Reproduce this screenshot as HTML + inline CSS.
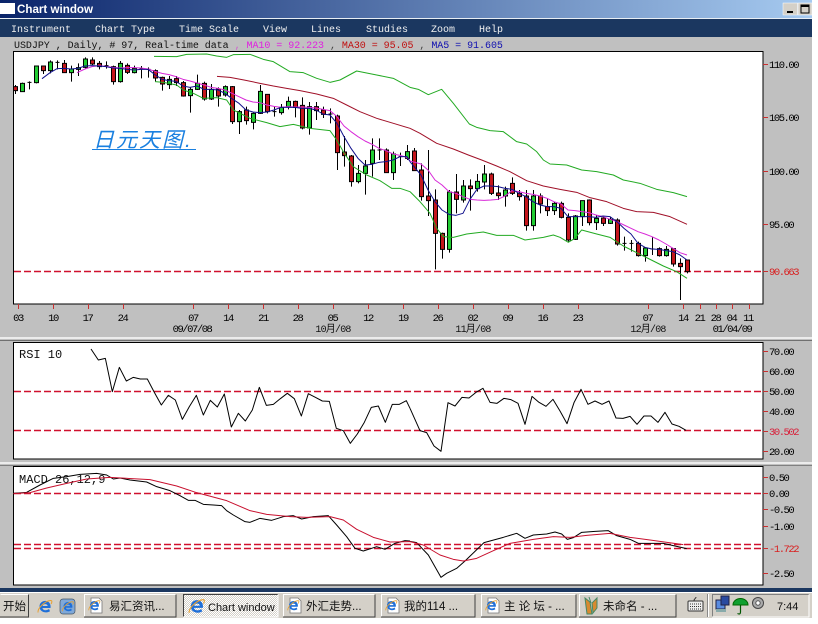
<!DOCTYPE html>
<html><head><meta charset="utf-8"><style>
html,body{margin:0;padding:0;background:#fff;width:818px;height:624px;overflow:hidden}
svg{display:block;position:absolute;left:0;top:0}
text{white-space:pre}
.m{font:10px "Liberation Mono",monospace}
.a{font:10.5px "Liberation Mono",monospace;letter-spacing:-1.45px;fill:#000}
.t{font:11.5px "Liberation Sans","Noto Sans CJK SC",sans-serif;fill:#111}
</style></head><body>
<svg width="818" height="624" viewBox="0 0 818 624" xmlns="http://www.w3.org/2000/svg">
<defs>
<linearGradient id="tb" x1="0" x2="1" y1="0" y2="0"><stop offset="0" stop-color="#0a246a"/><stop offset="1" stop-color="#a6caf0"/></linearGradient>
<pattern id="dith" width="2" height="2" patternUnits="userSpaceOnUse"><rect width="2" height="2" fill="#d4d0c8"/><rect width="1" height="1" fill="#fff"/><rect x="1" y="1" width="1" height="1" fill="#fff"/></pattern>
<g id="ie">
<path fill-rule="evenodd" fill="#1f6fd8" d="M13.500 9H5.500c.3 2.500 4 3 6.500 1l1 2.200c-4 2.500-10.500 1-10.500-4.700 0-5.500 7-7.500 10-3.500 1 1.300 1.300 3.200 1 5zM5.600 7h5c0-2.500-4.500-2.500-5 0z"/>
<path d="M1 13.500C.5 9 8 2 13.500 1.500c2-.2 1.500 2 .5 3.500" fill="none" stroke="#e8a030" stroke-width="1"/>
</g>
<g id="doc"><path d="M3 0h8l3 3v12H3z" fill="#fff" stroke="#777" stroke-width=".8"/><use href="#ie" transform="translate(0 1.500) scale(.8)"/></g>
</defs>
<!-- window -->
<rect x="0" y="0" width="812" height="592" fill="#c0c0c0"/>
<rect x="0" y="0" width="812" height="18" fill="url(#tb)"/>
<rect x="0" y="18" width="812" height="1" fill="#e8eef4"/>
<rect x="0" y="3" width="15" height="11" fill="#fff"/>
<text x="17" y="13" style="font:bold 11.6px 'Liberation Sans',sans-serif" fill="#fff">Chart window</text>
<rect x="783" y="3" width="14.500" height="12" fill="#d4d0c8" stroke="#fff" stroke-width=".5"/><rect x="787" y="11" width="6" height="2" fill="#000"/>
<rect x="798" y="3" width="14" height="12" fill="#d4d0c8" stroke="#fff" stroke-width=".5"/><rect x="801" y="5" width="8" height="8" fill="none" stroke="#000"/><rect x="801" y="5" width="8" height="2" fill="#000"/>
<rect x="0" y="19" width="812" height="18" fill="#1b3760"/>
<g class="m" fill="#f0f0f0">
<text x="11" y="32">Instrument</text><text x="95" y="32">Chart Type</text><text x="179" y="32">Time Scale</text><text x="263" y="32">View</text><text x="311" y="32">Lines</text><text x="366" y="32">Studies</text><text x="431" y="32">Zoom</text><text x="479" y="32">Help</text>
</g>
<text class="m" x="14" y="48" fill="#111" style="letter-spacing:-.04px">USDJPY , Daily, # 97, Real-time data<tspan fill="#d060d0"> , </tspan><tspan fill="#e020e0">MA10 = 92.223</tspan><tspan fill="#444"> , </tspan><tspan fill="#c01010">MA30 = 95.05</tspan><tspan fill="#444"> , </tspan><tspan fill="#1010b0">MA5 = 91.605</tspan></text>

<!-- panels -->
<rect x="13.500" y="51.500" width="749.500" height="252.500" fill="#fff" stroke="#000"/>
<rect x="0" y="337" width="812" height="2" fill="#ececec"/><rect x="0" y="340" width="812" height="1" fill="#707070"/>
<rect x="13.500" y="342.500" width="749.500" height="116.500" fill="#fff" stroke="#000"/>
<rect x="0" y="462" width="812" height="2" fill="#ececec"/><rect x="0" y="465" width="812" height="1" fill="#808080"/>
<rect x="13.500" y="466.500" width="749.500" height="118.500" fill="#fff" stroke="#000"/>
<rect x="0" y="588" width="812" height="4" fill="#1b3760"/>

<!-- dashes -->
<g stroke="#d0102e" stroke-width="1.400" stroke-dasharray="7 3" fill="none">
<path d="M14 271.500H763"/><path d="M14 391.500H763"/><path d="M14 430.500H763"/><path d="M14 493.500H763"/><path d="M14 544.500H763"/><path d="M14 548.500H763"/>
</g>

<!-- ticks -->
<g stroke="#c83030" stroke-width="1" fill="none">
<path d="M18.500 304v5M53.500 304v5M88.500 304v5M123.500 304v5M193.500 304v5M228.500 304v5M263.500 304v5M298.500 304v5M333.500 304v5M368.500 304v5M403.500 304v5M438.500 304v5M473.500 304v5M508.500 304v5M543.500 304v5M578.500 304v5M648.500 304v5M683.500 304v5M700.500 304v5M716.500 304v5M732.500 304v5M749.500 304v5"/>
<path d="M763 64.500h5M763 117.500h5M763 171.500h5M763 224.500h5M763 271.500h5M763 351.500h5M763 371.500h5M763 391.500h5M763 411.500h5M763 431.500h5M763 451.500h5M763 477.500h5M763 493.500h5M763 509.500h5M763 526.500h5M763 548.500h5M763 573.500h5"/>
</g>

<!-- candles left -->
<g transform="scale(.33333)" stroke="#000" stroke-width="3">
<path fill="none" d="M46.500 255V282M67.500 248V276M88.500 244V268M82.500 247h12M109.500 198V250M130.500 197V222M151.500 181V220M172.500 181V208M166.500 187h12M193.500 180V218M214.500 197V245M235.500 190V228M256.500 172V205M277.500 172V195M298.500 183V208M319.500 184V206M313.500 197h12M340.500 197V254M361.500 183V248M382.500 190V222M403.500 197V220M424.500 198V235M418.500 207h12M445.500 202V233M439.500 208h12M466.500 208V244M487.500 230V272M508.500 228V267M529.500 228V258M550.500 243V290M571.500 262V338M592.500 224V270M613.500 245V302M634.500 252V300M655.500 262V320M676.500 256V290M697.500 258V372M718.500 330V402M739.500 320V374M760.500 338V388M781.500 255V342M802.500 283V340M823.500 320V350M817.500 335h12M844.500 312V344M865.500 290V328M886.500 302V352M907.500 292V388M928.500 306V404M949.500 306V360M970.500 320V354M991.500 325V370M985.500 342h12M1012.500 344V510M1033.500 408V500M1054.500 465V560M1075.500 495V550M1096.500 480V584M1117.500 415V530M1138.500 415V480M1132.500 450h12M1159.500 445V518M1180.500 455V540M1201.500 458V498M1195.500 470h12M1222.500 435V480"/>
<path fill="#c4161c" d="M40.500 260h12v12h-12zM124.500 198h12v14h-12zM187.500 190h12v28h-12zM271.500 180h12v12h-12zM292.500 190h12v10h-12zM334.500 200h12v45h-12zM376.500 196h12v21h-12zM460.500 212h12v22h-12zM481.500 232h12v20h-12zM523.500 236h12v12h-12zM544.500 248h12v40h-12zM607.500 250h12v47h-12zM649.500 267h12v21h-12zM691.500 260h12v105h-12zM733.500 330h12v32h-12zM796.500 283h12v52h-12zM880.500 304h12v18h-12zM901.500 316h12v68h-12zM943.500 320h12v12h-12zM964.500 330h12v13h-12zM1006.500 348h12v110h-12zM1027.500 456h12v11h-12zM1048.500 468h12v77h-12zM1153.500 450h12v68h-12z"/>
<path fill="#22cc33" d="M61.500 250h12v25h-12zM103.500 198h12v50h-12zM145.500 186h12v26h-12zM208.500 207h12v11h-12zM229.500 203h12v5h-12zM250.500 177h12v25h-12zM355.500 190h12v55h-12zM397.500 205h12v13h-12zM502.500 238h12v16h-12zM565.500 268h12v19h-12zM586.500 250h12v18h-12zM628.500 268h12v29h-12zM670.500 260h12v25h-12zM712.500 335h12v30h-12zM754.500 340h12v27h-12zM775.500 274h12v66h-12zM838.500 322h12v16h-12zM859.500 304h12v16h-12zM922.500 320h12v64h-12zM1069.500 520h12v25h-12zM1090.500 498h12v22h-12zM1111.500 450h12v40h-12zM1174.500 462h12v56h-12zM1216.500 455h12v20h-12z"/>
</g>
<!-- candles right -->
<g transform="translate(410 160) scale(.33333)" stroke="#000" stroke-width="3">
<path fill="none" d="M13.500 -36V33M34.500 10V122M55.500 -30V168M76.500 88V328M97.500 218V296M118.500 90V278M139.500 42V160M160.500 60V128M181.500 58V152M202.500 42V95M223.500 15V88M244.500 38V105M265.500 76V120M286.500 80V140M307.500 52V105M328.500 90V122M349.500 90V212M370.500 90V212M391.500 100V160M412.500 115V168M433.500 125V165M454.500 125V175M475.500 160V245M496.500 165V240M517.500 122V198M538.500 118V196M559.500 165V210M580.500 168V198M601.500 170V192M622.500 175V257M643.500 230V272M637.500 250h12M664.500 240V275M658.500 250h12M685.500 245V290M706.500 262V305M727.500 232V285M721.500 267h12M748.500 262V290M769.500 258V290M790.500 265V320M811.500 295V420M832.500 300V340"/>
<path fill="#c4161c" d="M7.500 -27h12v59h-12zM28.500 30h12v80h-12zM49.500 108h12v14h-12zM70.500 120h12v100h-12zM91.500 220h12v48h-12zM133.500 96h12v22h-12zM175.500 78h12v8h-12zM238.500 42h12v58h-12zM259.500 99h12v8h-12zM301.500 70h12v30h-12zM322.500 100h12v10h-12zM343.500 108h12v89h-12zM385.500 108h12v24h-12zM406.500 140h12v12h-12zM448.500 130h12v42h-12zM469.500 172h12v68h-12zM532.500 120h12v68h-12zM574.500 174h12v16h-12zM616.500 180h12v72h-12zM679.500 250h12v37h-12zM742.500 266h12v21h-12zM784.500 266h12v46h-12zM805.500 310h12v10h-12zM826.500 300h12v35h-12z"/>
<path fill="#22cc33" d="M112.500 96h12v172h-12zM154.500 78h12v42h-12zM196.500 64h12v22h-12zM217.500 42h12v24h-12zM280.500 90h12v18h-12zM364.500 108h12v89h-12zM427.500 130h12v22h-12zM490.500 168h12v70h-12zM511.500 122h12v48h-12zM553.500 175h12v13h-12zM595.500 178h12v12h-12zM700.500 264h12v23h-12zM763.500 268h12v19h-12z"/>
</g>

<!-- moving averages -->
<g transform="scale(.33333)" fill="none" stroke-width="3" stroke-linejoin="round">
<polyline stroke="#22aa22" points="462,169 530,170 560,163 620,162 650,168 680,172 700,164 750,163 790,178 820,185 870,215 910,218 950,235 990,247 1020,240 1070,213 1130,225 1180,235 1230,262"/>
<polyline stroke="#22aa22" points="465,245 490,247 530,255 550,270 580,280 610,295 650,293 680,300 700,330 750,355 800,368 840,380 880,373 930,385 990,392 1010,420 1030,455 1060,500 1100,525 1140,542 1175,565 1200,565 1230,575"/>
<polyline stroke="#a01028" points="651,229 690,232 732,240 780,250 820,258 860,265 900,272 950,282 1000,295 1040,315 1080,335 1130,355 1180,370 1230,385"/>
<polyline stroke="#d828d8" points="231,218 255,207 276,200 297,197 318,199 339,202 360,204 381,203 402,203 423,204 444,207 465,214 486,220 507,224 528,230 549,238 570,243 591,249 612,255 633,262 654,265 675,270 696,280 717,290 738,300 759,306 780,308 801,315 822,319 843,322 864,320 885,321 906,321 927,322 948,324 969,328 990,332 1011,350 1032,378 1053,395 1074,410 1095,423 1116,433 1137,445 1158,452 1179,462 1200,466 1221,472 1230,483"/>
<polyline stroke="#10108c" points="126,236 150,218 171,206 192,205 213,207 234,205 255,198 276,197 297,198 318,200 339,204 360,205 381,208 402,210 423,208 444,208 465,224 486,238 507,242 528,244 549,258 570,262 591,258 612,268 633,268 654,270 675,280 696,296 717,310 738,330 759,336 780,338 801,336 822,330 843,322 864,322 885,322 906,325 927,325 948,330 969,342 990,345 1011,370 1032,410 1053,445 1074,475 1095,495 1116,493 1137,487 1158,485 1179,480 1200,470 1221,470 1230,485"/>
</g>
<g transform="translate(410 0) scale(.33333)" fill="none" stroke-width="3" stroke-linejoin="round">
<polyline stroke="#22aa22" points="0,262 25,268 55,284 95,268 130,310 178,372 200,382 240,392 280,395 320,425 350,432 380,455 400,480 420,492 470,495 515,510 560,515 610,525 640,540 690,550 740,568 790,578 831,590"/>
<polyline stroke="#22aa22" points="0,575 30,605 60,640 80,685 100,710 130,712 170,702 220,696 260,706 310,706 345,720 400,712 430,705 450,712 475,727 495,715 515,690 560,702 600,712 640,738 700,768 760,798 800,815 831,835"/>
<polyline stroke="#a01028" points="0,385 30,400 80,430 130,447 175,465 215,480 260,498 300,515 350,542 400,558 450,568 500,577 540,593 590,605 640,625 680,635 730,637 780,650 831,673"/>
<polyline stroke="#d828d8" points="0,483 33,492 54,510 75,540 96,555 117,575 138,580 159,590 180,598 201,600 222,601 243,600 264,598 285,588 306,572 327,575 348,580 369,583 390,588 411,595 432,605 453,612 474,630 495,632 516,635 537,638 558,645 579,650 600,658 621,665 642,675 663,685 684,695 705,702 726,710 747,720 768,732 789,745 810,758 831,765"/>
<polyline stroke="#10108c" points="0,485 33,525 54,570 75,605 96,630 117,643 138,646 159,640 180,598 201,568 222,558 243,558 264,560 285,565 306,568 327,580 348,590 369,605 390,615 411,620 432,620 453,625 474,650 495,650 516,650 537,650 558,652 579,648 600,650 621,665 642,685 663,702 684,730 705,742 726,747 747,748 768,752 789,755 810,765 831,780"/>
</g>

<!-- RSI -->
<g transform="translate(0 335) scale(.33333)" fill="none" stroke="#000" stroke-width="3" stroke-linejoin="round">
<polyline points="273,42 295,75 316,70 337,170 358,97 379,138 400,127 421,132 442,132 463,172 484,210 505,181 526,195 547,253 568,215 589,181 610,240 631,196 652,216 673,177 694,276 715,235 736,258 757,225 778,157 799,211 820,208 841,191 862,175 883,191 904,243 925,176 946,187 967,198 988,199 1009,280 1030,287 1051,325 1072,297 1093,262 1114,217 1135,213 1156,262 1177,208 1198,208 1219,197 1230,220"/>
</g>
<g transform="translate(410 335) scale(.33333)" fill="none" stroke="#000" stroke-width="3" stroke-linejoin="round">
<polyline points="0,220 30,287 50,293 72,333 93,349 114,203 135,213 156,187 177,189 198,172 219,160 240,202 261,205 282,190 303,194 324,205 345,268 366,184 387,202 408,214 429,193 450,228 471,266 492,203 513,163 534,208 555,198 576,208 597,198 618,249 639,250 660,244 681,268 702,243 723,243 744,262 765,232 786,267 807,274 828,286"/>
</g>

<!-- MACD -->
<text x="19" y="483" style="font:12px 'Liberation Mono',monospace" fill="#111">MACD 26,12,9</text>
<g transform="translate(0 460) scale(.33333)" fill="none" stroke-width="3" stroke-linejoin="round">
<polyline stroke="#000" points="40,100 80,97 120,75 160,55 200,50 240,43 290,40 320,45 340,57 360,54 390,60 440,66 470,80 510,92 540,107 565,121 585,121 610,133 640,135 665,137 680,152 700,165 735,185 750,187 780,175 815,181 850,170 880,167 905,177 940,170 985,167 1010,195 1040,230 1065,265 1090,273 1130,260 1155,268 1185,250 1215,242 1230,243"/>
<polyline stroke="#c8102e" points="40,101 90,98 140,84 200,70 260,57 330,52 450,59 530,78 590,98 680,122 750,152 800,163 870,170 920,172 990,170 1030,180 1070,208 1120,232 1170,246 1230,245"/>
</g>
<g transform="translate(410 460) scale(.33333)" fill="none" stroke-width="3" stroke-linejoin="round">
<polyline stroke="#000" points="0,244 20,248 55,285 93,352 110,340 140,325 165,303 222,248 280,232 320,220 345,235 370,225 410,222 435,216 455,222 472,238 490,233 515,217 555,214 595,212 620,227 660,238 685,250 720,250 760,250 830,266"/>
<polyline stroke="#c8102e" points="0,245 40,255 90,285 130,298 160,303 200,295 250,272 300,250 370,238 430,230 480,232 530,226 600,220 660,232 720,240 820,254"/>
</g>

<!-- chart caption -->
<text x="93" y="147" style="font:italic 21px 'Liberation Sans','Noto Sans CJK SC',sans-serif;letter-spacing:2px" fill="#1a80e0">日元天图.</text>
<rect x="92" y="149" width="104" height="1" fill="#1a80e0"/>
<text x="19" y="358" style="font:12px 'Liberation Mono',monospace" fill="#111">RSI 10</text>

<!-- axis labels -->
<g class="a">
<text x="769" y="68">110.00</text><text x="769" y="121">105.00</text><text x="769" y="175">100.00</text><text x="769" y="228">95.00</text><text x="769" y="275" style="fill:#d82020">90.663</text>
<text x="769" y="355">70.00</text><text x="769" y="375">60.00</text><text x="769" y="395">50.00</text><text x="769" y="415">40.00</text><text x="769" y="435" style="fill:#d8203a">30.502</text><text x="769" y="455">20.00</text>
<text x="769" y="481">0.50</text><text x="769" y="497">0.00</text><text x="769" y="513">-0.50</text><text x="769" y="530">-1.00</text><text x="769" y="552" style="fill:#d82020">-1.722</text><text x="769" y="577">-2.50</text>
</g>
<g class="a" text-anchor="middle">
<text x="18" y="321">03</text><text x="53" y="321">10</text><text x="87.500" y="321">17</text><text x="122.500" y="321">24</text><text x="193" y="321">07</text><text x="228" y="321">14</text><text x="263" y="321">21</text><text x="297.500" y="321">28</text><text x="332.500" y="321">05</text><text x="368" y="321">12</text><text x="403" y="321">19</text><text x="437.500" y="321">26</text><text x="472.500" y="321">02</text><text x="507.500" y="321">09</text><text x="542.500" y="321">16</text><text x="577.500" y="321">23</text><text x="647.500" y="321">07</text><text x="683" y="321">14</text><text x="699.500" y="321">21</text><text x="715.500" y="321">28</text><text x="731.500" y="321">04</text><text x="748" y="321">11</text>
<text x="192" y="332">09/07/08</text>
<text x="732" y="332">01/04/09</text>
</g>
<g text-anchor="middle" style="font:10px 'Liberation Mono','Noto Sans CJK SC',monospace;letter-spacing:-.8px" fill="#111">
<text x="333" y="332">10月/08</text><text x="473" y="332">11月/08</text><text x="648" y="332">12月/08</text>
</g>

<!-- taskbar -->
<rect x="0" y="592" width="812" height="26" fill="#d4d0c8"/>
<rect x="0" y="592" width="812" height="1" fill="#fff"/>
<path d="M0.500 594.500H28.500V617" fill="none" stroke="#fff"/><path d="M28.500 594.500V617H0" fill="none" stroke="#404040"/>
<text class="t" x="3" y="610">开始</text>
<use href="#ie" x="37" y="599"/>
<rect x="60" y="599" width="15" height="15" rx="3" fill="#7fa8d8" stroke="#456" stroke-width=".7"/><use href="#ie" transform="translate(61.500 600.500) scale(.8)"/>
<g fill="none">
<path d="M84.500 617V594.500H176" stroke="#fff"/><path d="M176 594.500V617H84" stroke="#404040"/>
<rect x="183.500" y="594.500" width="94" height="22" fill="url(#dith)" stroke="none"/><path d="M183.500 617V594.500H278" stroke="#404040"/><path d="M278 594.500V617H183" stroke="#fff"/>
<path d="M283.500 617V594.500H375" stroke="#fff"/><path d="M375 594.500V617H283" stroke="#404040"/>
<path d="M381.500 617V594.500H475" stroke="#fff"/><path d="M475 594.500V617H381" stroke="#404040"/>
<path d="M481.500 617V594.500H576" stroke="#fff"/><path d="M576 594.500V617H481" stroke="#404040"/>
<path d="M579.500 617V594.500H676" stroke="#fff"/><path d="M676 594.500V617H579" stroke="#404040"/>
</g>
<use href="#doc" x="88" y="598"/><use href="#ie" transform="translate(188 598) scale(1.100)"/><use href="#doc" x="287" y="598"/><use href="#doc" x="385" y="598"/><use href="#doc" x="485" y="598"/>
<path d="M585 598l5 4 2 12h-5zM597 598l-5 5 1 10 4-5zM589 597l2 6" fill="#d88a30" stroke="#486" stroke-width="1"/>
<g class="t">
<text x="109" y="610">易汇资讯...</text>
<text x="208" y="611" style="font-size:11px">Chart window</text>
<text x="306" y="610">外汇走势...</text>
<text x="404" y="610">我的114 ...</text>
<text x="504" y="610">主 论 坛 - ...</text>
<text x="603" y="610">未命名 - ...</text>
<text x="777" y="610" style="font-size:11px">7:44</text>
</g>
<!-- keyboard -->
<rect x="688" y="601" width="15" height="10" rx="1" fill="#eee" stroke="#333"/>
<path d="M690 604h11M690 606.500h11M690 609h11" stroke="#333" stroke-width="1" stroke-dasharray="1 1"/>
<path d="M694 601c0-3 2-2 2-4" stroke="#333" fill="none"/>
<path d="M708.500 594v23" stroke="#fff"/><path d="M707.500 594v23" stroke="#888"/>
<!-- tray -->
<path d="M712.500 617V594.500H809" stroke="#808080" fill="none"/><path d="M809 594.500V617H712" stroke="#fff" fill="none"/>
<rect x="716" y="600" width="9" height="9" fill="#5a8ce0" stroke="#224"/><rect x="721" y="596" width="8" height="9" fill="#2a4aa0" stroke="#224"/><path d="M716 609h10v3h-10z" fill="#8aa"/>
<path d="M733 605a7.500 6.500 0 0 1 15 0z" fill="#10a030" stroke="#060"/><path d="M740.500 605v7q0 3-3 1.500" fill="none" stroke="#050" stroke-width="1.200"/>
<circle cx="758" cy="603" r="5.500" fill="#aaa" stroke="#444"/><circle cx="758" cy="603" r="2.200" fill="#fff" stroke="#555"/>
</svg>
</body></html>
